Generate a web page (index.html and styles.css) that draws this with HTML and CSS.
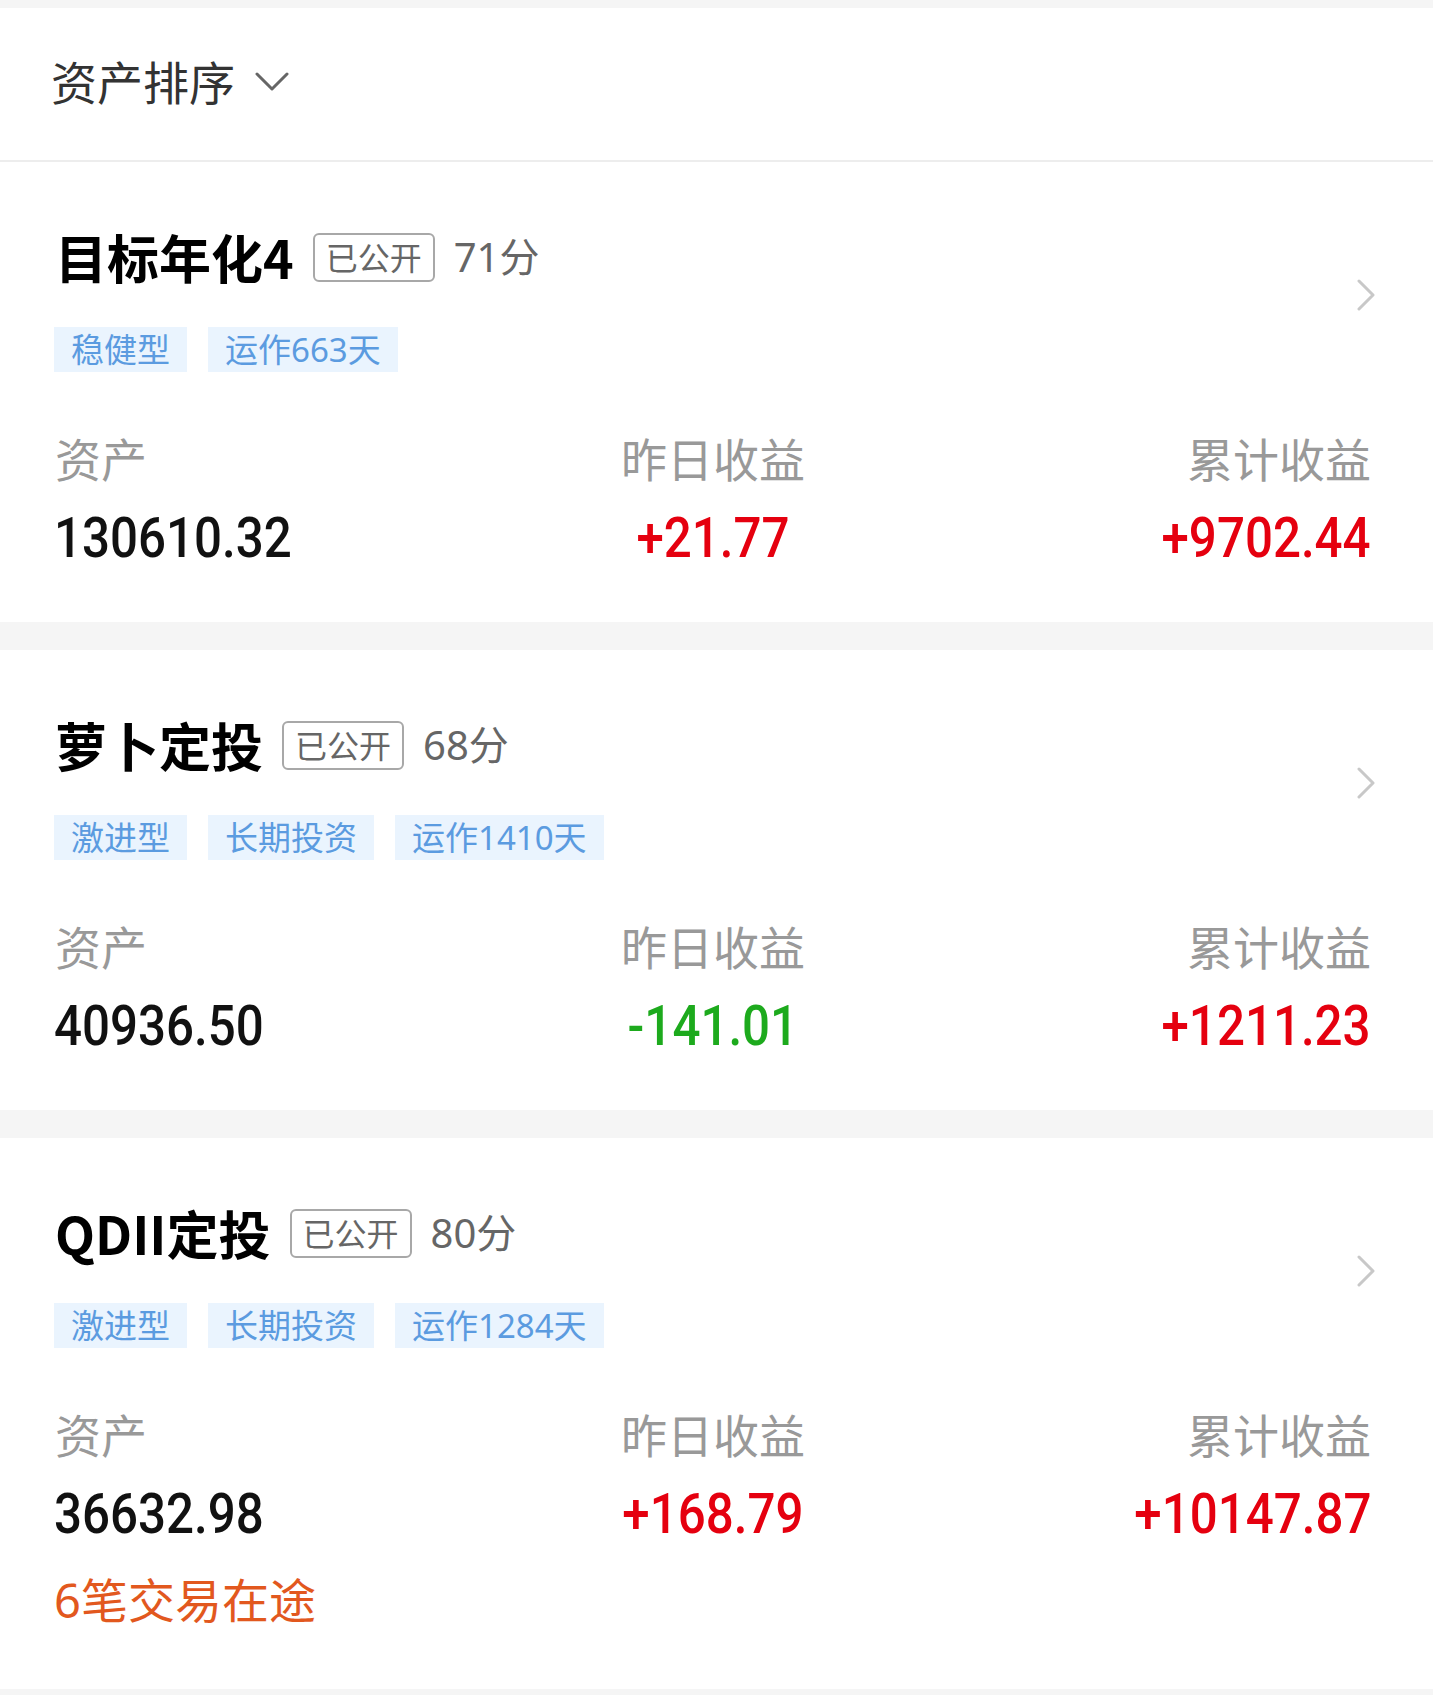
FILE: index.html
```html
<!DOCTYPE html>
<html lang="zh-CN">
<head>
    <meta charset="UTF-8">
    <meta name="viewport" content="width=device-width, initial-scale=1.0">
    <title>我的组合</title>
    <link rel="stylesheet" href="styles.css">
</head>
<body>
    <main class="page">
        <div class="sort-bar">
            <span class="sort-bar__label">资产排序</span>
            <svg class="sort-bar__arrow" width="34" height="20" viewBox="0 0 34 20">
                <path d="M2 2 L17 17 L32 2" fill="none" stroke="#666" stroke-width="3" stroke-linecap="round" stroke-linejoin="round"/>
            </svg>
        </div>

        <section class="card">
            <div class="card-head">
                <div class="card-info">
                    <div class="title-row">
                        <h2 class="title">目标年化4</h2>
                        <span class="badge">已公开</span>
                        <span class="score">71分</span>
                    </div>
                    <div class="tags">
                        <span class="tag">稳健型</span>
                        <span class="tag">运作663天</span>
                    </div>
                </div>
                <svg class="card-arrow" width="20" height="32" viewBox="0 0 20 32">
                    <path d="M3 2 L17 16 L3 30" fill="none" stroke="#c8c8c8" stroke-width="3" stroke-linecap="round" stroke-linejoin="round"/>
                </svg>
            </div>
            <div class="stats">
                <div class="stat stat--left">
                    <span class="stat__label">资产</span>
                    <span class="stat__value">130610.32</span>
                </div>
                <div class="stat stat--center">
                    <span class="stat__label">昨日收益</span>
                    <span class="stat__value up">+21.77</span>
                </div>
                <div class="stat stat--right">
                    <span class="stat__label">累计收益</span>
                    <span class="stat__value up">+9702.44</span>
                </div>
            </div>
        </section>

        <section class="card">
            <div class="card-head">
                <div class="card-info">
                    <div class="title-row">
                        <h2 class="title">萝卜定投</h2>
                        <span class="badge">已公开</span>
                        <span class="score">68分</span>
                    </div>
                    <div class="tags">
                        <span class="tag">激进型</span>
                        <span class="tag">长期投资</span>
                        <span class="tag">运作1410天</span>
                    </div>
                </div>
                <svg class="card-arrow" width="20" height="32" viewBox="0 0 20 32">
                    <path d="M3 2 L17 16 L3 30" fill="none" stroke="#c8c8c8" stroke-width="3" stroke-linecap="round" stroke-linejoin="round"/>
                </svg>
            </div>
            <div class="stats">
                <div class="stat stat--left">
                    <span class="stat__label">资产</span>
                    <span class="stat__value">40936.50</span>
                </div>
                <div class="stat stat--center">
                    <span class="stat__label">昨日收益</span>
                    <span class="stat__value down">-141.01</span>
                </div>
                <div class="stat stat--right">
                    <span class="stat__label">累计收益</span>
                    <span class="stat__value up">+1211.23</span>
                </div>
            </div>
        </section>

        <section class="card">
            <div class="card-head">
                <div class="card-info">
                    <div class="title-row">
                        <h2 class="title">QDII定投</h2>
                        <span class="badge">已公开</span>
                        <span class="score">80分</span>
                    </div>
                    <div class="tags">
                        <span class="tag">激进型</span>
                        <span class="tag">长期投资</span>
                        <span class="tag">运作1284天</span>
                    </div>
                </div>
                <svg class="card-arrow" width="20" height="32" viewBox="0 0 20 32">
                    <path d="M3 2 L17 16 L3 30" fill="none" stroke="#c8c8c8" stroke-width="3" stroke-linecap="round" stroke-linejoin="round"/>
                </svg>
            </div>
            <div class="stats">
                <div class="stat stat--left">
                    <span class="stat__label">资产</span>
                    <span class="stat__value">36632.98</span>
                </div>
                <div class="stat stat--center">
                    <span class="stat__label">昨日收益</span>
                    <span class="stat__value up">+168.79</span>
                </div>
                <div class="stat stat--right">
                    <span class="stat__label">累计收益</span>
                    <span class="stat__value up">+10147.87</span>
                </div>
            </div>
            <div class="transit">6笔交易在途</div>
        </section>
    </main>
</body>
</html>
```

FILE: styles.css
```css
*,
*::after,
*::before {
  box-sizing: border-box;
  margin: 0;
  padding: 0;
}

body {
  background: #f5f5f5;
  font-family: "Noto Sans", "Noto Sans CJK SC", sans-serif;
  color: #111;
}

.page {
  padding: 8px 0 6px;
}

.sort-bar {
  align-items: center;
  background: #fff;
  border-bottom: 2px solid #ededed;
  display: flex;
  gap: 20px;
  height: 154px;
  padding: 0 0 5px 51px;
}

.sort-bar__label {
  color: #333;
  font-size: 46px;
  line-height: 1;
}

.card {
  background: #fff;
  margin-bottom: 28px;
  padding: 65px 62px 52px 54px;
}

.card:last-child {
  margin-bottom: 0;
}

.card-head {
  align-items: center;
  display: flex;
}

.card-info {
  flex: 1;
}

.card-arrow {
  margin: 0 -5px 10px 0;
}

.title-row {
  align-items: center;
  display: flex;
  gap: 19px;
  height: 60px;
}

.title {
  color: #000;
  font-family: "Noto Sans CJK SC", sans-serif;
  font-size: 52px;
  font-weight: 700;
  line-height: 60px;
  margin-left: 1px;
}

.badge {
  border: 2px solid #a8a8a8;
  border-radius: 6px;
  color: #666;
  font-size: 32px;
  height: 49px;
  line-height: 45px;
  padding: 0 11px;
}

.score {
  color: #666;
  font-size: 40px;
  line-height: 1;
}

.tags {
  display: flex;
  gap: 21px;
  margin-top: 40px;
}

.tag {
  background: #eaf4fe;
  color: #5b9be0;
  font-size: 33px;
  height: 45px;
  line-height: 45px;
  padding: 0 17px;
}

.stats {
  display: grid;
  grid-template-columns: 1fr auto 1fr;
  margin-top: 59px;
}

.stat {
  display: flex;
  flex-direction: column;
}

.stat--left { align-items: flex-start; }
.stat--center { align-items: center; }
.stat--right { align-items: flex-end; }

.stat__label {
  color: #999;
  font-size: 46px;
  line-height: 56px;
  margin-left: 1px;
}

.stat__value {
  display: inline-block;
  font-family: Roboto, sans-serif;
  font-size: 56px;
  font-weight: 500;
  line-height: 64px;
  margin-top: 19px;
  transform: scaleX(0.88);
}

.stat--left .stat__value { transform-origin: left; }
.stat--right .stat__value { transform-origin: right; }

.up { color: #e5000f; }
.down { color: #1daa1d; }

.transit {
  color: #e2581e;
  font-size: 47px;
  line-height: 56px;
  margin-top: 26px;
  padding-bottom: 9px;
}
```
